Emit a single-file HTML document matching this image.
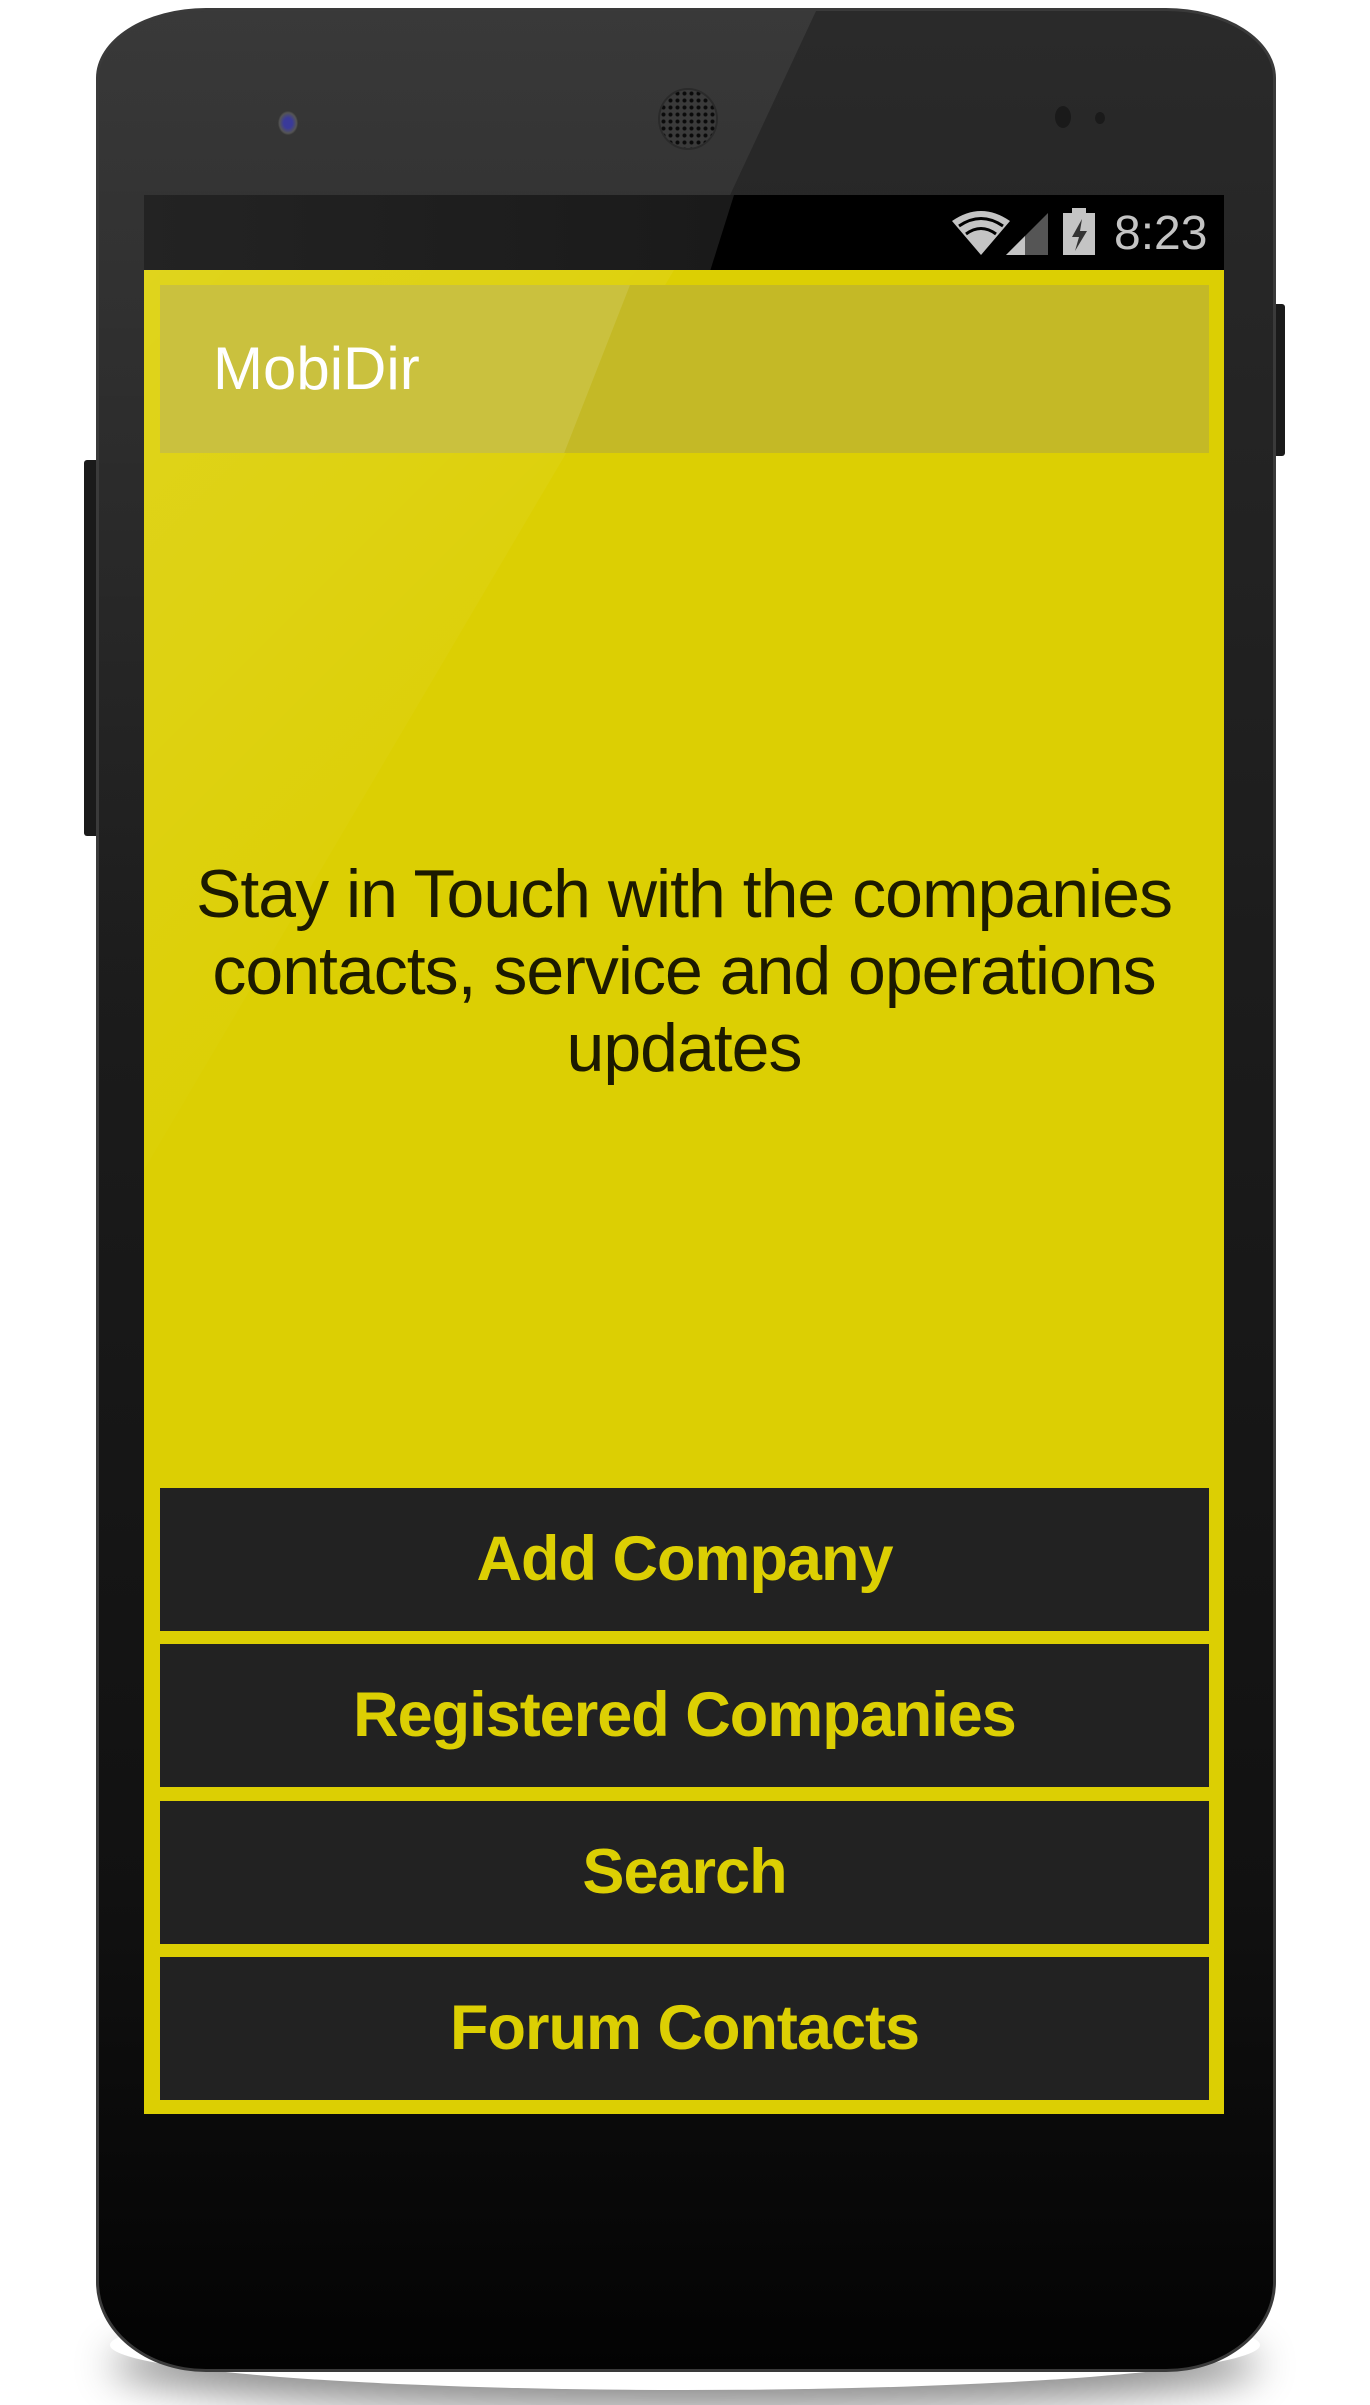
<!DOCTYPE html>
<html><head><meta charset="utf-8"><style>
html,body{margin:0;padding:0;background:#fff;width:1370px;height:2405px;overflow:hidden;position:relative;font-family:"Liberation Sans",sans-serif}
.shadow{position:absolute;left:110px;top:2300px;width:1150px;height:90px;border-radius:50%;box-shadow:0 20px 40px rgba(0,0,0,.45);}
.phone{position:absolute;left:96px;top:8px;width:1180px;height:2364px;background:linear-gradient(180deg,#2a2a2a 0%,#1c1c1c 40%,#111 80%,#030303 100%);border-radius:110px 110px 110px 110px / 70px 70px 90px 90px;border:3px solid #3a3a3a;box-sizing:border-box;overflow:hidden}
.phone .glare{position:absolute;left:0;top:0;width:1180px;height:1000px;background:linear-gradient(180deg,rgba(255,255,255,0.07),rgba(255,255,255,0.0));clip-path:polygon(0 0,717px 0,250px 1000px,0 1000px)}
.btnr{position:absolute;left:1276px;top:304px;width:9px;height:152px;background:#1a1a1a;border-radius:0 3px 3px 0}
.btnl{position:absolute;left:84px;top:460px;width:12px;height:376px;background:#1a1a1a;border-radius:3px 0 0 3px}
.cam{position:absolute;left:278px;top:111px;width:20px;height:24px;border-radius:50%;background:radial-gradient(#3a3a9a 30%,#555 60%,#222 80%)}
.spk{position:absolute;left:658px;top:88px;width:56px;height:58px;border-radius:50%;background:radial-gradient(circle,#0a0a0a 1.5px,#3a3a3a 2.5px) 0 0/7px 7px;border:2px solid #2a2a2a}
.sens{position:absolute;left:1055px;top:106px;width:16px;height:22px;border-radius:50%;background:#1a1a1a}
.sens2{position:absolute;left:1095px;top:112px;width:10px;height:12px;border-radius:50%;background:#1a1a1a}
.status{position:absolute;left:144px;top:195px;width:1080px;height:75px;background:#000}
.status .stl{position:absolute;left:0;top:0;width:590px;height:75px;background:linear-gradient(90deg,#232323,#1a1a1a);clip-path:polygon(0 0,100% 0,96% 100%,0 100%)}
.time{position:absolute;left:970px;top:12px;color:#c4c4c4;font-size:48px;line-height:54px}
.screen{position:absolute;left:144px;top:270px;width:1080px;height:1844px;background:#dccf03}
.screen .gl{position:absolute;left:0;top:0;width:540px;height:900px;background:linear-gradient(135deg,rgba(255,255,255,0.10),rgba(255,255,255,0.0) 70%);clip-path:polygon(0 0,530px 0,0 900px)}
.appbar{position:absolute;left:16px;top:15px;width:1049px;height:168px;background:#c4b926}
.appbar .l{position:absolute;left:0;top:0;width:470px;height:168px;background:#cac13e;clip-path:polygon(0 0,100% 0,86% 100%,0 100%)}
.title{position:absolute;left:53px;top:52px;color:#fff;font-size:60px;line-height:64px}
.msg{position:absolute;left:0;top:586px;width:1080px;text-align:center;color:#1c1a00;font-size:68px;line-height:77px;letter-spacing:-1px}
.b{position:absolute;left:16px;width:1049px;height:143px;background:#222;color:#dccf03;font-weight:bold;font-size:63px;text-align:center;line-height:143px;letter-spacing:-1px}
</style></head><body>
<div class="shadow"></div>
<div class="btnr"></div><div class="btnl"></div>
<div class="phone"><div class="glare"></div></div>
<div class="cam"></div><div class="spk"></div><div class="sens"></div><div class="sens2"></div>
<div class="status"><div class="stl"></div>
<svg style="position:absolute;left:806px;top:12px" width="160" height="50" viewBox="0 0 160 50">
<path d="M2 14 Q31 -6 60 14 L31 48 Z" fill="#c4c4c4"/>
<path d="M9 19 Q31 4 53 19" stroke="#000" stroke-width="3" fill="none"/>
<path d="M16 27 Q31 16 46 27" stroke="#000" stroke-width="3" fill="none"/>
<path d="M56 48 L98 6 L98 48 Z" fill="#555"/>
<path d="M56 48 L75 29 L75 48 Z" fill="#c4c4c4"/>
<rect x="113" y="6" width="32" height="42" fill="#c4c4c4"/><rect x="122" y="1" width="14" height="6" fill="#c4c4c4"/>
<path d="M132 12 L122 30 L129 30 L125 44 L137 24 L130 24 Z" fill="#333"/>
</svg>
<div class="time">8:23</div></div>
<div class="screen"><div class="gl"></div>
<div class="appbar"><div class="l"></div><div class="title">MobiDir</div></div>
<div class="msg">Stay in Touch with the companies<br>contacts, service and operations<br>updates</div>
<div class="b" style="top:1218px">Add Company</div>
<div class="b" style="top:1374px">Registered Companies</div>
<div class="b" style="top:1531px">Search</div>
<div class="b" style="top:1687px">Forum Contacts</div>
</div>
</body></html>
